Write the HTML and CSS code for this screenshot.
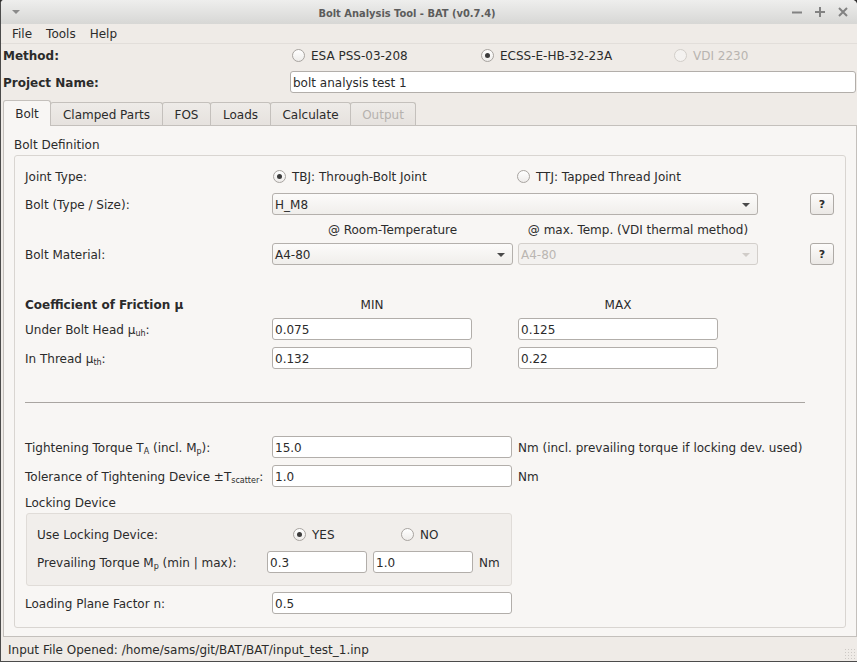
FILE: index.html
```html
<!DOCTYPE html>
<html>
<head>
<meta charset="utf-8">
<link rel="stylesheet" href="styles.css">
</head>
<body>
<div class="window">
  <div class="titlebar">
    <div class="tb-left"><span class="tb-tri"></span></div>
    <div class="title">Bolt Analysis Tool - BAT (v0.7.4)</div>
    <div class="tb-right">
      <span class="tb-btn"><svg width="12" height="12" viewBox="0 0 12 12"><path d="M1 6.5H11" stroke="#828282" stroke-width="2"/></svg></span>
      <span class="tb-btn"><svg width="12" height="12" viewBox="0 0 12 12"><path d="M1 6H11M6 1V11" stroke="#828282" stroke-width="2"/></svg></span>
      <span class="tb-btn"><svg width="12" height="12" viewBox="0 0 12 12"><path d="M2 2L10 10M10 2L2 10" stroke="#828282" stroke-width="2"/></svg></span>
    </div>
  </div>
  <div class="menubar"><span class="mi">File</span><span class="mi">Tools</span><span class="mi">Help</span></div>

  <div class="toprow">
    <span class="toplabel">Method:</span>
    <label class="radio m1"><i class="rb"></i><span class="t">ESA PSS-03-208</span></label>
    <label class="radio m2"><i class="rb on"></i><span class="t">ECSS-E-HB-32-23A</span></label>
    <label class="radio dis"><i class="rb"></i><span class="t">VDI 2230</span></label>
  </div>
  <div class="toprow project">
    <span class="toplabel">Project Name:</span>
    <div class="input project-input">bolt analysis test 1</div>
  </div>

  <div class="tabs">
    <span class="tab sel t-bolt">Bolt</span>
    <span class="tab t-clamp">Clamped Parts</span>
    <span class="tab t-fos">FOS</span>
    <span class="tab t-loads">Loads</span>
    <span class="tab t-calc">Calculate</span>
    <span class="tab t-out dis">Output</span>
  </div>

  <div class="pane">
    <div class="gb-title">Bolt Definition</div>
    <div class="groupbox">
      <div class="row mt9">
        <span class="lbl">Joint Type:</span>
        <label class="radio tbj"><i class="rb on"></i><span class="t">TBJ: Through-Bolt Joint</span></label>
        <label class="radio"><i class="rb"></i><span class="t">TTJ: Tapped Thread Joint</span></label>
      </div>
      <div class="row mt6">
        <span class="lbl">Bolt (Type / Size):</span>
        <div class="combo w-bolt"><span class="t">H_M8</span><i class="arrow"></i></div>
        <span class="qbtn">?</span>
      </div>
      <div class="row mt3">
        <span class="lbl"></span>
        <span class="hdr w241">@ Room-Temperature</span>
        <span class="hdr w240 ml5">@ max. Temp. (VDI thermal method)</span>
      </div>
      <div class="row mt3">
        <span class="lbl">Bolt Material:</span>
        <div class="combo w241"><span class="t">A4-80</span><i class="arrow"></i></div>
        <div class="combo disabled w240 ml5"><span class="t">A4-80</span><i class="arrow"></i></div>
        <span class="qbtn">?</span>
      </div>
      <div class="row mt28">
        <span class="lbl bold">Coefficient of Friction μ</span>
        <span class="hdr w200">MIN</span>
        <span class="hdr w200 ml46">MAX</span>
      </div>
      <div class="row mt3">
        <span class="lbl">Under Bolt Head μ<sub>uh</sub>:</span>
        <div class="input w200">0.075</div>
        <div class="input w200 ml46">0.125</div>
      </div>
      <div class="row mt7">
        <span class="lbl">In Thread μ<sub>th</sub>:</span>
        <div class="input w200">0.132</div>
        <div class="input w200 ml46">0.22</div>
      </div>
      <div class="sep"></div>
      <div class="row">
        <span class="lbl">Tightening Torque T<sub>A</sub> (incl. M<sub>p</sub>):</span>
        <div class="input w240">15.0</div>
        <span class="unit">Nm (incl. prevailing torque if locking dev. used)</span>
      </div>
      <div class="row mt7">
        <span class="lbl">Tolerance of Tightening Device ±T<sub>scatter</sub>:</span>
        <div class="input w240">1.0</div>
        <span class="unit">Nm</span>
      </div>
      <div class="row mt4">
        <span class="lbl">Locking Device</span>
      </div>
      <div class="innerbox">
        <div class="row">
          <span class="lbl ilbl">Use Locking Device:</span>
          <label class="radio yes"><i class="rb on"></i><span class="t">YES</span></label>
          <label class="radio"><i class="rb"></i><span class="t">NO</span></label>
        </div>
        <div class="row mt6">
          <span class="lbl ilbl2">Prevailing Torque M<sub>p</sub> (min | max):</span>
          <div class="input w100">0.3</div>
          <div class="input w100 ml6">1.0</div>
          <span class="unit">Nm</span>
        </div>
      </div>
      <div class="row mt6">
        <span class="lbl">Loading Plane Factor n:</span>
        <div class="input w240">0.5</div>
      </div>
    </div>
  </div>

  <div class="statusbar">
    <span class="t">Input File Opened: /home/sams/git/BAT/BAT/input_test_1.inp</span>
    <span class="grip"></span>
  </div>
</div>
</body>
</html>
```

FILE: styles.css
```css
* { box-sizing: border-box; margin: 0; padding: 0; }
html, body { width: 857px; height: 662px; overflow: hidden; background: #2f2f2f; }
body { font-family: "DejaVu Sans", "Liberation Sans", sans-serif; font-size: 12px; color: #2b2b2b; }

.window {
  width: 857px; height: 662px;
  background: #efebe7;
  border-left: 1px solid #4b4b4b;
  border-bottom: 1px solid #4b4b4b;
  border-radius: 4px 5px 0 0;
  display: flex; flex-direction: column;
  overflow: hidden;
}

/* title bar */
.titlebar {
  height: 24px; flex: none;
  display: flex; align-items: center;
  background: linear-gradient(#eeeeed, #d7d7d5);
}
.tb-left { width: 27px; display: flex; justify-content: center; padding-left: 2px; }
.tb-tri { width: 0; height: 0; border-left: 4px solid transparent; border-right: 4px solid transparent; border-top: 4px solid #8a8a8a; }
.title {
  flex: 1; text-align: center; padding-top: 2px;
  font-family: "DejaVu Sans Condensed", "DejaVu Sans", sans-serif;
  font-stretch: condensed;
  font-weight: bold; font-size: 11px; color: #5c5c5c;
}
.tb-right { width: 71px; display: flex; padding-right: 3px; }
.tb-btn { width: 23px; display: flex; justify-content: center; align-items: center; }

/* menu */
.menubar {
  height: 20px; flex: none;
  border-bottom: 1px solid #e2deda;
  display: flex; align-items: center; padding-left: 4px;
}
.mi { padding: 2px 7px 0 7px; line-height: 17px; }

/* top rows */
.toprow { height: 22px; flex: none; display: flex; align-items: center; }
.toprow.project { margin-top: 5px; }
.toplabel { width: 289px; flex: none; padding-left: 2px; padding-top: 2px; font-weight: bold; }
.project-input { flex: 1; margin-right: 1px; }
.radio { display: flex; align-items: center; gap: 6px; white-space: nowrap; }
.t { padding-top: 2px; }
.radio.m1 { width: 191px; padding-left: 2px; }
.radio.m2 { width: 193px; }
.radio.dis { color: #b8b4b0; }
.rb {
  width: 13px; height: 13px; flex: none; border-radius: 50%;
  border: 1px solid #a8a4a0;
  background: linear-gradient(#ffffff, #eeecea);
  position: relative;
}
.radio.dis .rb { border-color: #d2cec9; background: #f4f2f0; }
.rb.on::after {
  content: ""; position: absolute; left: 3px; top: 3px;
  width: 5px; height: 5px; border-radius: 50%; background: #3c3c3c;
}

/* tabs */
.tabs { height: 25px; flex: none; margin-top: 7px; margin-left: 2px; display: flex; align-items: flex-end; }
.tab {
  height: 23px; padding-top: 2px; line-height: 20px; text-align: center;
  border: 1px solid #c4c0bc; border-bottom: none;
  border-radius: 3px 3px 0 0;
  background: linear-gradient(#eeebe8, #e6e2de);
  margin-left: -1px;
}
.tab:first-child { margin-left: 0; }
.tab.sel {
  height: 26px; line-height: 23px; margin-bottom: -1px;
  background: #f8f6f4; position: relative; z-index: 1;
}
.t-bolt { width: 48px; }
.t-clamp { width: 113px; }
.t-fos { width: 49px; }
.t-loads { width: 61px; }
.t-calc { width: 81px; }
.t-out { width: 66px; }
.tab.dis { color: #b6b2ae; }

/* pane */
.pane {
  flex: 1; margin-left: 2px;
  border: 1px solid #c4c0bc;
  background: #f8f6f4;
  padding: 0 10px;
}
.gb-title { height: 29px; padding-top: 11px; line-height: 16px; }
.groupbox {
  width: 832px;
  border: 1px solid #d9d5d1; border-radius: 3px;
  padding: 0 10px 13px 10px;
}

.row { height: 22px; display: flex; align-items: center; white-space: nowrap; }
.mt3 { margin-top: 3px; } .mt4 { margin-top: 4px; } .mt6 { margin-top: 6px; }
.mt7 { margin-top: 7px; } .mt9 { margin-top: 9px; } .mt28 { margin-top: 28px; }
.ml5 { margin-left: 5px; } .ml6 { margin-left: 6px; } .ml46 { margin-left: 46px; }
.lbl { width: 247px; flex: none; padding-top: 2px; }
.bold { font-weight: bold; }
sub { font-size: 8px; vertical-align: -2px; line-height: 0; }

.tbj { width: 245px; padding-left: 1px; }

.hdr { text-align: center; flex: none; padding-top: 2px; }
.w241 { width: 241px; flex: none; }
.w240 { width: 240px; flex: none; }
.w200 { width: 200px; flex: none; }
.w100 { width: 100px; flex: none; }
.w-bolt { width: 486px; flex: none; }

.input {
  height: 22px; background: #ffffff;
  border: 1px solid #b2aeaa; border-radius: 3px;
  padding-left: 2px; padding-top: 2px; line-height: 18px;
}
.combo {
  height: 22px;
  border: 1px solid #b4b0ac; border-radius: 3px;
  background: linear-gradient(#fcfbfa, #f0eeeb);
  display: flex; align-items: center; justify-content: space-between;
  padding: 0 7px 0 2px;
}
.arrow { width: 0; height: 0; border-left: 4px solid transparent; border-right: 4px solid transparent; border-top: 4px solid #4a4a4a; margin-top: 1px; }
.combo.disabled { border-color: #d3cfcb; background: #f3f1ef; color: #bab6b2; }
.combo.disabled .arrow { border-top-color: #d0ccc8; }

.qbtn {
  width: 24px; height: 22px; margin-left: 52px; flex: none;
  border: 1px solid #aeaaa6; border-radius: 3px;
  background: linear-gradient(#fdfcfb, #ebe8e5);
  display: flex; align-items: center; justify-content: center;
  padding-top: 1px;
  font-weight: bold; font-size: 11px; color: #2b2b2b;
}

.unit { margin-left: 6px; padding-top: 2px; }

.sep { width: 780px; height: 1px; background: #a9a5a1; margin: 33px 0; }

.innerbox {
  margin-left: 1px; width: 486px;
  border: 1px solid #e0dcd8; border-radius: 3px;
  background: #f1eeeb;
  padding: 9px 10px 12px 10px;
}
.ilbl { width: 256px; }
.ilbl2 { width: 230px; }
.yes { width: 108px; }

/* status */
.statusbar {
  height: 24px; flex: none;
  display: flex; align-items: center; justify-content: space-between;
  padding-left: 7px;
}
.grip {
  width: 12px; height: 12px; align-self: flex-end; margin-bottom: 1px; margin-right: 1px;
  background-image: radial-gradient(circle, #cdc9c5 0.7px, transparent 1px);
  background-size: 3px 3px;
}
```
